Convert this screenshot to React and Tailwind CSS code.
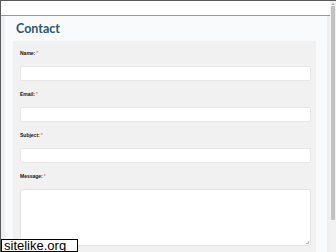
const fields = [
  { label: "Name:", type: "input" },
  { label: "Email:", type: "input" },
  { label: "Subject:", type: "input" },
  { label: "Message:", type: "textarea" },
];

export default function App() {
  return (
    <div className="relative w-[336px] h-[252px] overflow-hidden flex bg-[#edf0f2] border-l border-t border-[#5a5a5a] font-['Liberation_Sans',Arial,sans-serif]">
      <div className="flex-1 flex flex-col min-w-0">
        {/* top bar */}
        <div className="h-[15px] shrink-0 bg-white border-b border-[#8d9ba1]" />

        <div className="flex-1 flex pl-[4px] pr-[3px]">
          <div className="flex-1 bg-[#f9fafb] pl-[8px] pr-[11px] flex flex-col">
            <h1 className="pl-[3px] pt-[5px] h-[25px] text-[12.5px] leading-[16px] font-bold text-[#2b566b] font-['Lato',sans-serif]">
              Contact
            </h1>

            <div className="flex-1 bg-[#f1f1f1] pl-[7px] pr-[5px] pt-[7px] flex flex-col gap-[8px]">
              {fields.map((f) => (
                <div key={f.label} className="flex flex-col">
                  <div className="h-[12px] mb-[6px] flex items-center text-[5px] font-bold text-[#111]">
                    {f.label}
                    <span className="ml-[1px] text-[#d9534f] font-normal">*</span>
                  </div>
                  {f.type === "input" ? (
                    <div className="h-[15px] bg-white border border-[#e6e6e6] rounded-[2px]" />
                  ) : (
                    <div className="relative h-[57px] bg-white border border-[#e2e2e2] rounded-[2px]">
                      <div className="absolute right-[1px] bottom-[1px] w-[3px] h-[3px] border-r border-b border-[#b5b5b5]" />
                    </div>
                  )}
                </div>
              ))}
            </div>
          </div>
        </div>
      </div>

      {/* scrollbar */}
      <div className="w-[6px] shrink-0 bg-[#f1f1f1] flex flex-col items-center">
        <div className="h-[5px] text-[4px] leading-[5px] text-[#999]">▲</div>
        <div className="w-[4px] h-[214px] bg-[#c1c1c1] rounded-[1px]" />
      </div>

      {/* watermark */}
      <div className="absolute left-0 bottom-0 w-[77px] h-[13px] bg-white border border-black text-[13px] leading-[11px] text-black pl-[2px]">
        sitelike.org
      </div>
    </div>
  );
}
